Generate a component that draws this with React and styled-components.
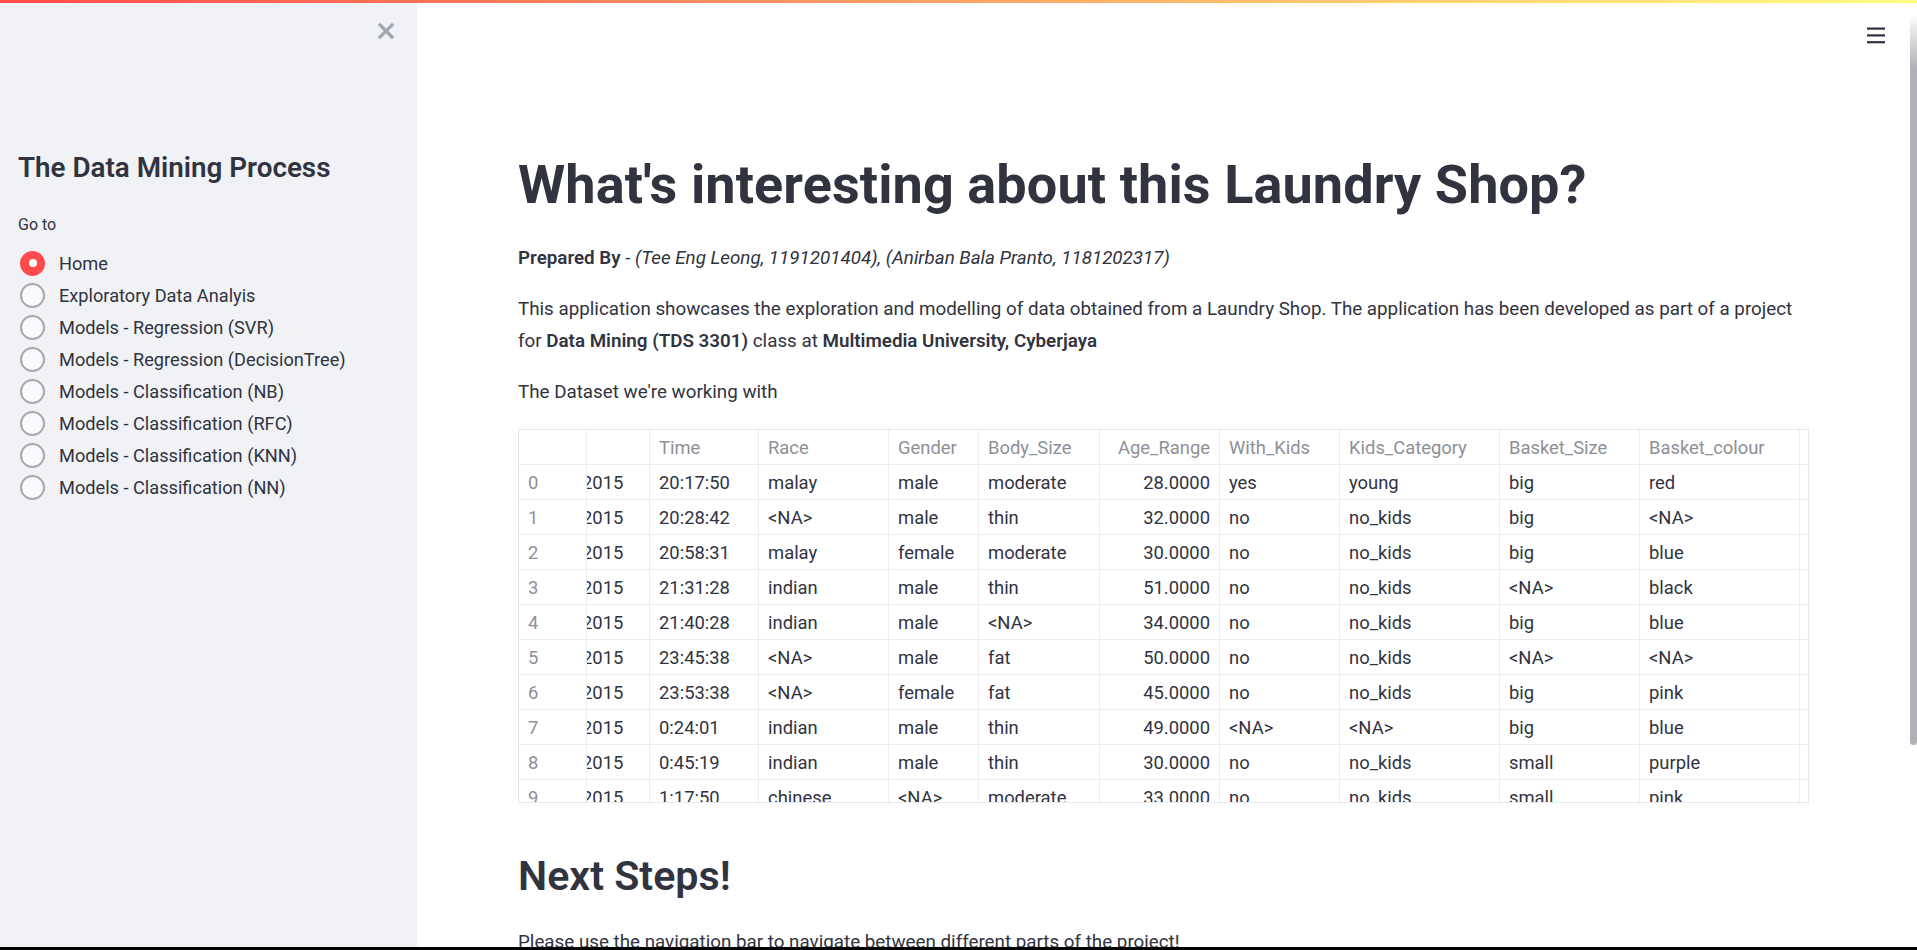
import React from 'react';
import styled, { createGlobalStyle } from 'styled-components';

const GlobalStyle = createGlobalStyle`
  html, body {
    margin: 0;
    padding: 0;
    height: 100%;
    overflow: hidden;
    background: #ffffff;
  }
  body {
    font-family: Roboto, "Liberation Sans", sans-serif;
    color: #31333f;
  }
  * {
    box-sizing: border-box;
  }
`;

const Page = styled.div`
  position: relative;
  width: 1917px;
  height: 950px;
  display: flex;
  flex-direction: column;
  overflow: hidden;
`;

const Decoration = styled.div`
  position: absolute;
  top: 0;
  left: 0;
  right: 0;
  height: 3px;
  z-index: 3;
  background: linear-gradient(90deg, #ff4b4b, #fffd80);
`;

const Body = styled.div`
  flex: 1;
  min-height: 0;
  display: flex;
`;

const BottomEdge = styled.div`
  height: 3px;
  background: #000000;
`;

/* sidebar */

const Sidebar = styled.aside`
  width: 417px;
  flex-shrink: 0;
  background: #f0f2f6;
  padding: 0 18px;
  display: flex;
  flex-direction: column;
`;

const CloseRow = styled.div`
  height: 62px;
  display: flex;
  justify-content: flex-end;
  align-items: center;
  margin-right: 4px;
`;

const CloseButton = styled.button`
  border: none;
  background: transparent;
  padding: 0;
  width: 18px;
  height: 18px;
  display: flex;
  cursor: pointer;
`;

const SidebarTitle = styled.h2`
  margin: 90px 0 0;
  font-size: 27.8px;
  line-height: 32px;
  font-weight: 600;
  color: #31333f;
`;

const FieldLabel = styled.div`
  margin-top: 31px;
  font-size: 16px;
  line-height: 20px;
  color: #31333f;
`;

const RadioGroup = styled.div`
  margin-top: 12px;
  display: flex;
  flex-direction: column;
`;

const RadioRow = styled.label`
  height: 32px;
  display: flex;
  align-items: center;
  gap: 14px;
  font-size: 18.2px;
  color: #31333f;
  cursor: pointer;
`;

const RadioCircle = styled.span`
  width: 25px;
  height: 25px;
  margin-left: 2px;
  border-radius: 50%;
  flex-shrink: 0;
  display: flex;
  align-items: center;
  justify-content: center;
  background: ${p => (p.$active ? '#ff4b4b' : '#fafafc')};
  border: ${p => (p.$active ? 'none' : '2.5px solid #a6a7af')};

  &::after {
    content: '';
    display: ${p => (p.$active ? 'block' : 'none')};
    width: 8px;
    height: 8px;
    border-radius: 50%;
    background: #ffffff;
  }
`;

/* main */

const Main = styled.main`
  flex: 1;
  position: relative;
  overflow: hidden;
  padding: 155px 101px 0 101px;
`;

const MenuButton = styled.button`
  position: absolute;
  top: 27px;
  right: 25px;
  width: 18px;
  height: 17px;
  padding: 0;
  border: none;
  background: transparent;
  display: flex;
`;

const Title = styled.h1`
  margin: 0 0 28px;
  font-size: 54px;
  line-height: 59px;
  letter-spacing: 0.1px;
  font-weight: 700;
  color: #31333f;
`;

const Paragraph = styled.p`
  margin: 0 0 ${p => p.$gap || 19}px;
  font-size: 18.8px;
  line-height: 32px;
  color: #31333f;
`;

const Strong = styled.strong`
  font-weight: 600;
`;

const Em = styled.em`
  font-style: italic;
`;

const SectionTitle = styled.h2`
  margin: 49px 0 26px;
  font-size: 41.2px;
  line-height: 48px;
  font-weight: 600;
  color: #31333f;
`;

/* dataframe */

const TableFrame = styled.div`
  height: 374px;
  border: 1px solid #e8e9ec;
  overflow: hidden;
`;

const Grid = styled.div`
  display: grid;
  grid-template-columns: 68px 63px 109px 130px 90px 121px 120px 120px 160px 140px 160px 8px;
  grid-auto-rows: 35px;
`;

const Cell = styled.div`
  display: flex;
  align-items: center;
  justify-content: ${p => (p.$num ? 'flex-end' : 'flex-start')};
  padding: 0 ${p => (p.$flush ? 0 : 9)}px;
  border-right: ${p => (p.$last ? 'none' : '1px solid #ececef')};
  border-bottom: 1px solid #ececef;
  font-size: 18.4px;
  white-space: nowrap;
  overflow: hidden;
  color: ${p => (p.$muted ? '#8e9098' : '#31333f')};
`;

const Clipped = styled.span`
  margin-left: -5px;
`;

/* page scrollbar */

const ScrollTrack = styled.div`
  width: 7px;
  flex-shrink: 0;
  background: #ffffff;
`;

const ScrollThumb = styled.div`
  margin-top: 14px;
  height: 731px;
  border-radius: 0 0 4px 4px;
  background: linear-gradient(180deg, #ffffff 0px, #b1b0b6 54px);
`;

const pages = [
  'Home',
  'Exploratory Data Analyis',
  'Models - Regression (SVR)',
  'Models - Regression (DecisionTree)',
  'Models - Classification (NB)',
  'Models - Classification (RFC)',
  'Models - Classification (KNN)',
  'Models - Classification (NN)',
];

const columns = [
  '', '', 'Time', 'Race', 'Gender', 'Body_Size', 'Age_Range',
  'With_Kids', 'Kids_Category', 'Basket_Size', 'Basket_colour', '',
];

const rows = [
  ['20:17:50', 'malay', 'male', 'moderate', '28.0000', 'yes', 'young', 'big', 'red'],
  ['20:28:42', '<NA>', 'male', 'thin', '32.0000', 'no', 'no_kids', 'big', '<NA>'],
  ['20:58:31', 'malay', 'female', 'moderate', '30.0000', 'no', 'no_kids', 'big', 'blue'],
  ['21:31:28', 'indian', 'male', 'thin', '51.0000', 'no', 'no_kids', '<NA>', 'black'],
  ['21:40:28', 'indian', 'male', '<NA>', '34.0000', 'no', 'no_kids', 'big', 'blue'],
  ['23:45:38', '<NA>', 'male', 'fat', '50.0000', 'no', 'no_kids', '<NA>', '<NA>'],
  ['23:53:38', '<NA>', 'female', 'fat', '45.0000', 'no', 'no_kids', 'big', 'pink'],
  ['0:24:01', 'indian', 'male', 'thin', '49.0000', '<NA>', '<NA>', 'big', 'blue'],
  ['0:45:19', 'indian', 'male', 'thin', '30.0000', 'no', 'no_kids', 'small', 'purple'],
  ['1:17:50', 'chinese', '<NA>', 'moderate', '33.0000', 'no', 'no_kids', 'small', 'pink'],
];

const CloseIcon = () => (
  <svg width="18" height="18" viewBox="0 0 18 18">
    <path d="M3 3 L15 15 M15 3 L3 15" stroke="#a3a6b0" strokeWidth="3.2" strokeLinecap="square" />
  </svg>
);

const MenuIcon = () => (
  <svg width="18" height="17" viewBox="0 0 18 17">
    <rect x="0" y="0.5" width="18" height="2.2" fill="#31333f" />
    <rect x="0" y="7.3" width="18" height="2.2" fill="#31333f" />
    <rect x="0" y="14.1" width="18" height="2.2" fill="#31333f" />
  </svg>
);

const DataFrame = () => (
  <TableFrame>
    <Grid>
      {columns.map((name, i) => (
        <Cell key={`h${i}`} $muted $num={name === 'Age_Range'} $last={i === columns.length - 1}>
          {name}
        </Cell>
      ))}
      {rows.map((row, r) => (
        <React.Fragment key={r}>
          <Cell $muted>{r}</Cell>
          <Cell $flush>
            <Clipped>2015</Clipped>
          </Cell>
          {row.map((value, c) => (
            <Cell key={c} $num={c === 4}>
              {value}
            </Cell>
          ))}
          <Cell $last />
        </React.Fragment>
      ))}
    </Grid>
  </TableFrame>
);

export default function App() {
  return (
    <Page>
      <GlobalStyle />
      <Decoration />
      <Body>
        <Sidebar>
          <CloseRow>
            <CloseButton aria-label="Close sidebar">
              <CloseIcon />
            </CloseButton>
          </CloseRow>
          <SidebarTitle>The Data Mining Process</SidebarTitle>
          <FieldLabel>Go to</FieldLabel>
          <RadioGroup>
            {pages.map((page, i) => (
              <RadioRow key={page}>
                <RadioCircle $active={i === 0} />
                {page}
              </RadioRow>
            ))}
          </RadioGroup>
        </Sidebar>

        <Main>
          <MenuButton aria-label="Menu">
            <MenuIcon />
          </MenuButton>
          <Title>What's interesting about this Laundry Shop?</Title>
          <Paragraph>
            <Strong>Prepared By</Strong> -{' '}
            <Em>(Tee Eng Leong, 1191201404), (Anirban Bala Pranto, 1181202317)</Em>
          </Paragraph>
          <Paragraph>
            This application showcases the exploration and modelling of data obtained from a
            Laundry Shop. The application has been developed as part of a project
            <br />
            for <Strong>Data Mining (TDS 3301)</Strong> class at{' '}
            <Strong>Multimedia University, Cyberjaya</Strong>
          </Paragraph>
          <Paragraph $gap={21}>The Dataset we're working with</Paragraph>
          <DataFrame />
          <SectionTitle>Next Steps!</SectionTitle>
          <Paragraph>
            Please use the navigation bar to navigate between different parts of the project!
          </Paragraph>
        </Main>

        <ScrollTrack>
          <ScrollThumb />
        </ScrollTrack>
      </Body>
      <BottomEdge />
    </Page>
  );
}
